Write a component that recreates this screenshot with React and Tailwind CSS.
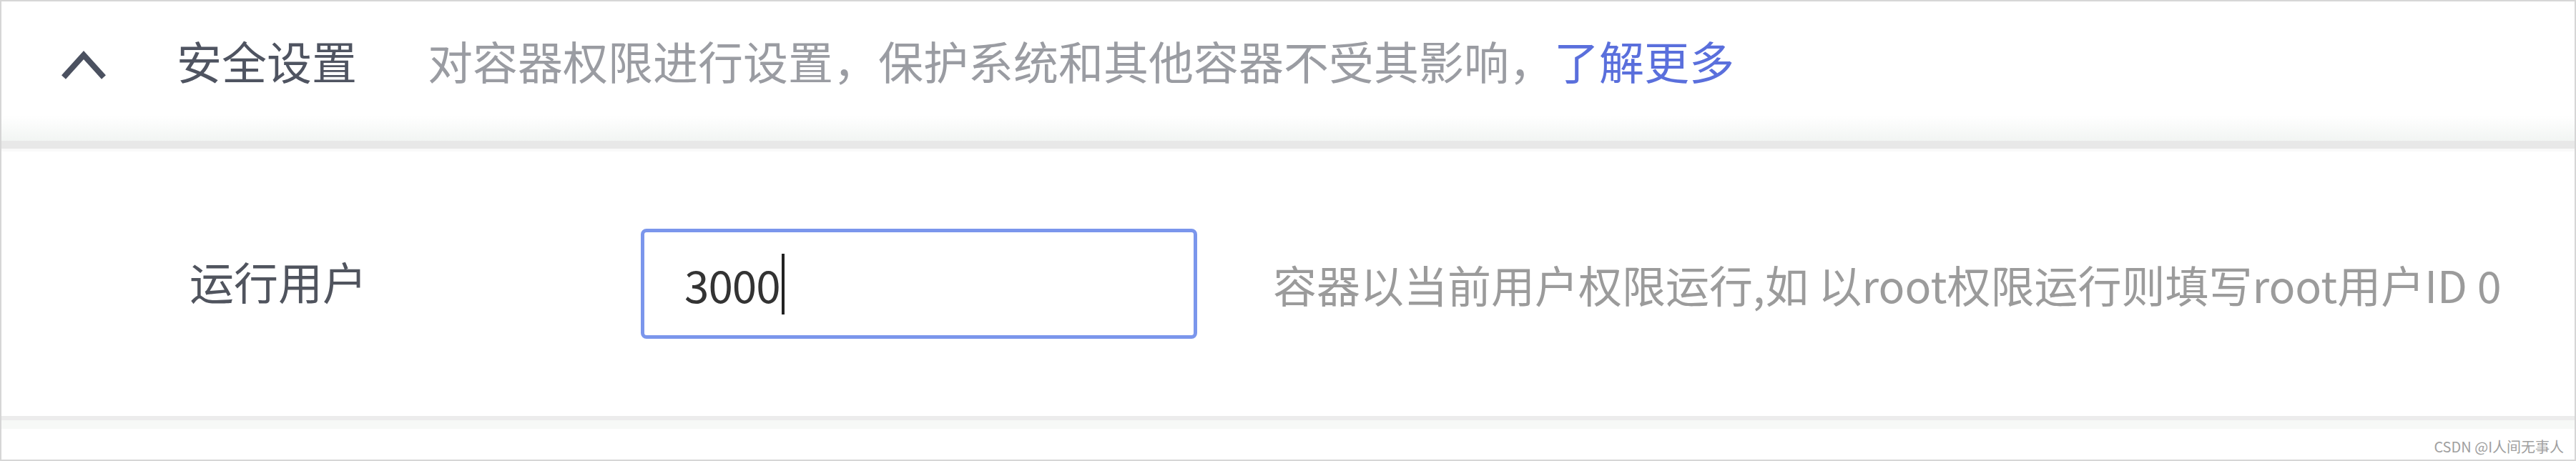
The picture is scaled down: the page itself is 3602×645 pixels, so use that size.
import React from 'react';

const cjk = { fontFamily: '"Noto Sans CJK SC", "Noto Sans", sans-serif' };

function ChevronUp() {
  return (
    <svg width="66" height="44" viewBox="0 0 66 44" className="shrink-0 mt-[14px]">
      <path d="M5 39 L33 8 L61 39" fill="none" stroke="#4b5160" strokeWidth="8" strokeLinejoin="miter" />
    </svg>
  );
}

export default function App() {
  return (
    <div className="relative w-[3602px] h-[645px] bg-white border-2 border-[#d6d6d6] overflow-hidden" style={cjk}>
      {/* 头部 */}
      <div className="h-[195px] flex items-center pl-[82px] pb-[32px] bg-linear-to-b from-white from-[82%] to-[#f2f5f3]">
        <ChevronUp />
        <span className="ml-[97px] text-[63px] leading-none text-[#4f5461]">安全设置</span>
        <span className="ml-[99px] text-[63px] leading-none text-[#9a9ca2]">
          对容器权限进行设置，保护系统和其他容器不受其影响，
          <a className="text-[#5a6fdc]">了解更多</a>
        </span>
      </div>
      <div className="h-[11px] bg-[#e8e8e8]" />
      <div className="h-[4px] bg-[#f9f9f9]" />

      {/* 内容 */}
      <div className="h-[370px] flex items-center">
        <span className="ml-[263px] w-[631px] shrink-0 text-[62px] leading-none text-[#50545e] -mt-[8px]">运行用户</span>
        <div className="w-[778px] h-[154px] shrink-0 border-[5px] border-[#7b96ec] rounded-[8px] flex items-center pl-[56px]">
          <span className="text-[62px] leading-none text-[#333] tracking-[-1px]">3000</span>
          <span className="w-[4px] h-[85px] bg-[#222] ml-[2px]" />
        </div>
        <span className="ml-[106px] text-[61px] leading-none text-[#9b9b9b] whitespace-nowrap">
          容器以当前用户权限运行,如 以root权限运行则填写root用户ID 0
        </span>
      </div>

      <div className="h-[6px] bg-[#ececec]" />
      <div className="h-[12px] bg-[#f7f9f7]" />

      <span className="absolute right-[15px] bottom-[8px] text-[20px] text-[#a0a0a0] leading-none">CSDN @I人间无事人</span>
    </div>
  );
}
